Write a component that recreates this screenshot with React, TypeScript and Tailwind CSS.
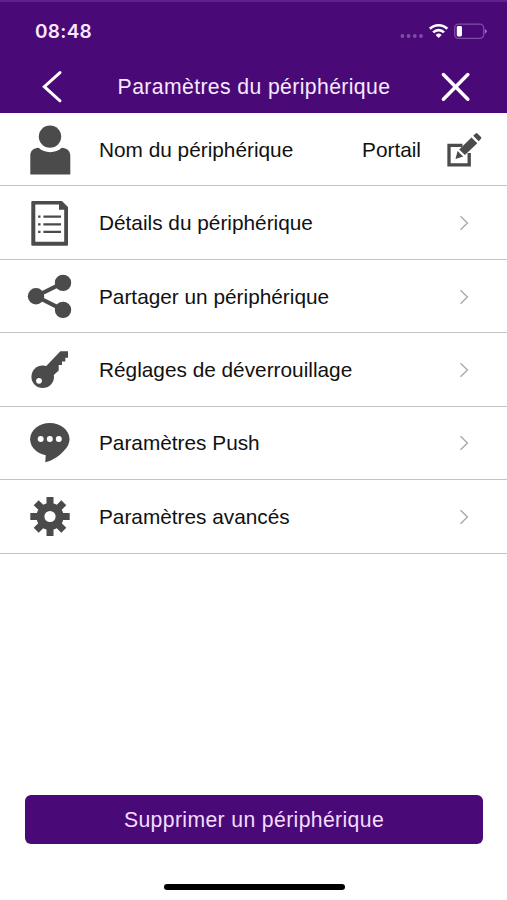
import type { ReactNode } from 'react';

interface SettingRow {
  id: string;
  label: string;
  icon: ReactNode;
  value?: string;
}

// All row icons share one 48x73 box, the height of a row
function RowIcon({ children }: { children: ReactNode }) {
  return (
    <svg viewBox="26 0 48 73" className="w-12 h-[73px] shrink-0 text-[#4b4b4b]" fill="currentColor">
      {children}
    </svg>
  );
}

const UserIcon = () => (
  <RowIcon>
    <circle cx="50" cy="23.6" r="11.2" />
    <path d="M30.3 61.4V42.5C30.3 38 33.5 35 38.6 34.8C44.5 40.6 55.8 40.6 61.7 34.8C66.8 35 70.3 38 70.3 42.5V61.4Z" />
  </RowIcon>
);

const DocumentIcon = () => (
  <RowIcon>
    <path
      fillRule="evenodd"
      d="M32.3 15H62L68 21V58.7Q68 59.7 67 59.7H32.3Q31.3 59.7 31.3 58.7V16Q31.3 15 32.3 15ZM35.3 18.6V55.8H64.2V23.8H59V18.6Z"
    />
    <path d="M43.4 30.7H61M43.4 38.3H61M43.4 45.8H61M38.1 30.7H40.5M38.1 38.3H40.5M38.1 45.8H40.5" stroke="currentColor" strokeWidth="2.2" />
  </RowIcon>
);

const ShareIcon = () => (
  <RowIcon>
    <path d="M63 22.9L36 36.3L63 49.9" fill="none" stroke="currentColor" strokeWidth="4" />
    <circle cx="36" cy="36.3" r="8.2" />
    <circle cx="63" cy="22.9" r="8.2" />
    <circle cx="63" cy="49.9" r="8.2" />
  </RowIcon>
);

const KeyIcon = () => (
  <RowIcon>
    <path d="M46 33.2L60.4 18.2H68V24.8H65.3V28.5H62V32H58.7V37.5L53.3 42.5Z" />
    <circle cx="42.7" cy="43.8" r="11.3" />
    <circle cx="39" cy="47.8" r="2.9" fill="white" />
  </RowIcon>
);

const ChatIcon = () => (
  <RowIcon>
    <ellipse cx="49.8" cy="33.2" rx="19.7" ry="16.2" />
    <path d="M45.8 47.5L45.3 56.2C52.5 54.5 60.5 49.5 65 43.2Z" />
    <circle cx="40.7" cy="33.1" r="3" fill="white" />
    <circle cx="49.8" cy="33.1" r="3" fill="white" />
    <circle cx="58.8" cy="33.1" r="3" fill="white" />
  </RowIcon>
);

const GearIcon = () => (
  <RowIcon>
    <path
      d="M50 17V56M30.3 36.5H69.7M36.2 22.7L63.8 50.3M63.8 22.7L36.2 50.3"
      stroke="currentColor"
      strokeWidth="7"
    />
    <circle cx="50" cy="36.5" r="13.6" />
    <circle cx="50" cy="36.5" r="5.6" fill="white" />
  </RowIcon>
);

function EditIcon() {
  return (
    <svg viewBox="446 0 36 73" className="w-9 h-[73px] shrink-0 text-[#4b4b4b]" fill="currentColor">
      <path d="M462.5 32.4H449V51.8H469.2V40" fill="none" stroke="currentColor" strokeWidth="3.3" />
      <path d="M455.5 46L457.6 38L463.2 43.4Z" />
      <path d="M459.2 36.4L471.5 24.5L477.3 30.2L464.9 42Z" />
      <path d="M473.2 22.8L475.6 20.5Q476.5 19.7 477.4 20.5L481 24.1Q481.8 25 481 25.8L478.7 28.3Z" />
    </svg>
  );
}

function Chevron() {
  return (
    <svg viewBox="0 0 10 16" className="w-2.5 h-4 mt-px mr-[38px] text-[#aaaaaa]" fill="none" stroke="currentColor" strokeWidth="1.4">
      <path d="M1.5 1.2L8.4 8L1.5 14.8" />
    </svg>
  );
}

const rows: SettingRow[] = [
  { id: 'name', label: 'Nom du périphérique', icon: <UserIcon />, value: 'Portail' },
  { id: 'details', label: 'Détails du périphérique', icon: <DocumentIcon /> },
  { id: 'share', label: 'Partager un périphérique', icon: <ShareIcon /> },
  { id: 'unlock', label: 'Réglages de déverrouillage', icon: <KeyIcon /> },
  { id: 'push', label: 'Paramètres Push', icon: <ChatIcon /> },
  { id: 'advanced', label: 'Paramètres avancés', icon: <GearIcon /> },
];

function StatusBar() {
  return (
    <div className="h-[58px] pl-[35px] pr-5 flex items-start justify-between">
      <span className="font-['Inter',sans-serif] font-semibold text-[19px] tracking-[0.3px] pt-[18px]">08:48</span>
      <svg viewBox="400 2 87 56" className="w-[87px] h-14" fill="none">
        <g fill="#7d4fa3">
          <circle cx="402.4" cy="36" r="1.9" />
          <circle cx="408.6" cy="36" r="1.9" />
          <circle cx="414.8" cy="36" r="1.9" />
          <circle cx="421" cy="36" r="1.9" />
        </g>
        <g stroke="white" strokeWidth="2.7">
          <path d="M429.9 28.8A12.4 12.4 0 0 1 447.3 28.8" />
          <path d="M433.2 32.4A7.7 7.7 0 0 1 444 32.4" />
        </g>
        <path d="M438.6 38L435.6 34.9A4.3 4.3 0 0 1 441.6 34.9Z" fill="white" />
        <rect x="454.7" y="24.2" width="29" height="14.2" rx="3.8" stroke="#7d4fa3" strokeWidth="1.3" />
        <path d="M484.9 28.9Q486.8 29.8 486.8 31.3T484.9 33.7Z" fill="#9a74b8" />
        <rect x="456.8" y="26" width="5.2" height="10.4" rx="1.4" fill="white" />
      </svg>
    </div>
  );
}

export default function App() {
  return (
    <div className="w-full h-[900px] bg-white flex flex-col overflow-hidden font-['Liberation_Sans',Arial,sans-serif] text-[20.8px] leading-6 text-[#111111]">
      {/* Header */}
      <header className="h-[113px] shrink-0 bg-[#490a78] text-[#f8e8ff] border-t-2 border-[#5c2488]">
        <StatusBar />
        <div className="h-[53px] flex items-center justify-between pl-[42px] pr-9">
          <button aria-label="Retour">
            <svg viewBox="42 70 22 33" className="w-[22px] h-[33px]" fill="none" stroke="white" strokeWidth="3" strokeLinecap="round">
              <path d="M60 72.6L44.3 86.7L60 100.8" />
            </svg>
          </button>
          <h1 className="text-[21.2px] tracking-[0.39px] pl-1">Paramètres du périphérique</h1>
          <button aria-label="Fermer">
            <svg viewBox="440 70 31 32" className="w-[31px] h-8" fill="none" stroke="white" strokeWidth="3.5" strokeLinecap="round">
              <path d="M443.4 73.5L467.8 98.2M467.8 73.5L443.4 98.2" />
            </svg>
          </button>
        </div>
      </header>

      {/* Settings */}
      <ul>
        {rows.map((row) => (
          <li key={row.id} className="h-[73.45px] flex items-center pl-[26px] border-b border-[#c4c4c4]">
            {row.icon}
            <span className="ml-[25px] pt-px flex-1 whitespace-nowrap">{row.label}</span>
            {row.value ? (
              <div className="flex items-center gap-[25px] pr-[25px]">
                <span className="pt-px">{row.value}</span>
                <EditIcon />
              </div>
            ) : (
              <Chevron />
            )}
          </li>
        ))}
      </ul>

      {/* Delete button and home indicator */}
      <footer className="mt-auto pl-[25px] pr-6 flex flex-col items-center">
        <button className="w-full h-[49px] rounded-md bg-[#490a78] text-[#f3dcff] text-[21.2px] tracking-[0.37px]">
          Supprimer un périphérique
        </button>
        <div className="w-[181px] h-1.5 rounded-full bg-black mt-10 mb-2.5" />
      </footer>
    </div>
  );
}
